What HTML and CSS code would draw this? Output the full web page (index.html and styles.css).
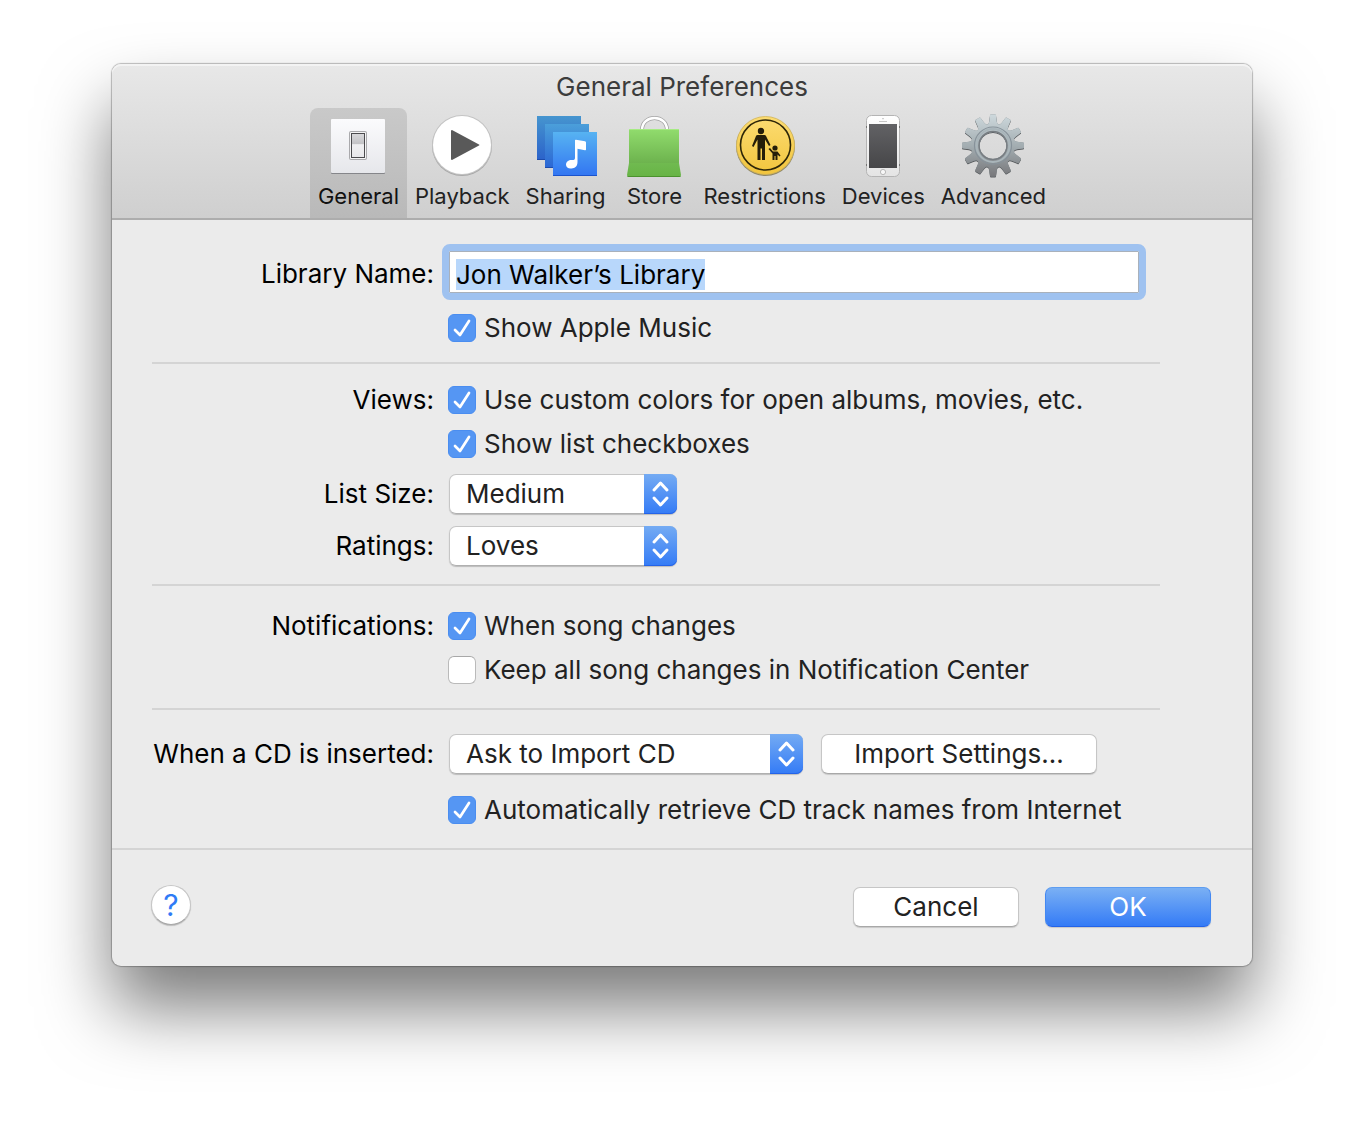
FILE: index.html
```html
<!DOCTYPE html>
<html lang="en">
<head>
  <meta charset="UTF-8">
  <meta name="viewport" content="width=device-width, initial-scale=1.0">
  <title>General Preferences</title>
  <link rel="stylesheet" href="styles.css">
</head>
<body>
  <form class="window" onsubmit="return false">
    <header class="titlebar">
      <h1 class="title">General Preferences</h1>
      <nav class="toolbar">
        <button type="button" class="tab active">
          <svg class="icon" viewBox="0 0 64 64">
            <defs>
              <linearGradient id="plate" x1="0" y1="0" x2="0" y2="1"><stop offset="0" stop-color="#fbfbfd"/><stop offset="1" stop-color="#e6e7eb"/></linearGradient>
              <linearGradient id="toggle" x1="0" y1="0" x2="0" y2="1"><stop offset="0" stop-color="#d9d9dc"/><stop offset=".45" stop-color="#c2c2c5"/><stop offset=".46" stop-color="#f0f0f2"/><stop offset="1" stop-color="#e8e8eb"/></linearGradient>
            </defs>
            <rect x="5" y="6" width="54" height="54" rx="1" fill="#85868a"/>
            <rect x="5" y="5" width="54" height="54" rx="1" fill="url(#plate)"/>
            <rect x="23" y="17" width="18" height="29" rx="2" fill="#a9a9ac"/>
            <rect x="24" y="18" width="16" height="27" rx="1" fill="#f4f4f5"/>
            <rect x="25.500" y="19.500" width="13" height="24" fill="url(#toggle)" stroke="#4b4b4e"/>
          </svg>
          <span>General</span>
        </button>
        <button type="button" class="tab">
          <svg class="icon" viewBox="0 0 64 64">
            <circle cx="32" cy="32" r="30" fill="#a8a8a8"/>
            <circle cx="32" cy="31" r="30" fill="#c4c4c4"/>
            <circle cx="32" cy="31" r="29" fill="#fff"/>
            <path d="M21 17q0-1 1-1L49 30.500q1 .5 0 1L22 46q-1 0-1-1z" fill="#595959"/>
          </svg>
          <span>Playback</span>
        </button>
        <button type="button" class="tab">
          <svg class="icon" viewBox="0 0 64 64">
            <defs>
              <linearGradient id="back" x1="0" y1="0" x2="0" y2="1"><stop offset="0" stop-color="#4695cf"/><stop offset="1" stop-color="#2b62ca"/></linearGradient>
              <linearGradient id="middle" x1="0" y1="0" x2="0" y2="1"><stop offset="0" stop-color="#4b9fda"/><stop offset="1" stop-color="#2b66d4"/></linearGradient>
              <linearGradient id="front" x1="0" y1="0" x2="0" y2="1"><stop offset="0" stop-color="#57b3f2"/><stop offset="1" stop-color="#3275f2"/></linearGradient>
            </defs>
            <path d="M3 2h44v44H3z" fill="url(#back)"/><path d="M3 45h44v1H3z" fill="#1d4cab"/>
            <path d="M11 10h44v44H11z" fill="url(#middle)"/><path d="M11 53h44v1H11z" fill="#1d4cab"/>
            <path d="M19 18h44v44H19z" fill="url(#front)"/><path d="M19 61h44v1H19z" fill="#1a53cc"/>
            <path d="M41 26.500q0-1 1-.7l9 1.400q1 .2 1 1.200v7q0 1-1 .8l-7.500-1.400V48c0 4.500-2.500 6-6 6.500-3 .4-5.500-1-5.500-3.700 0-3 2.500-4.800 5.500-4.800 1.500 0 3.500.3 3.500-2z" fill="#fff"/>
          </svg>
          <span>Sharing</span>
        </button>
        <button type="button" class="tab">
          <svg class="icon" viewBox="0 0 64 64">
            <defs>
              <linearGradient id="bag" x1="0" y1="0" x2="0" y2="1"><stop offset="0" stop-color="#91dc6d"/><stop offset="1" stop-color="#6db34e"/></linearGradient>
              <linearGradient id="fold" x1="0" y1="0" x2="0" y2="1"><stop offset="0" stop-color="#70ba50"/><stop offset="1" stop-color="#67b345"/></linearGradient>
            </defs>
            <path d="M20 16c0-16 25-16 25 0" fill="none" stroke="#a2a2a2" stroke-width="4"/>
            <path d="M20 16c0-16 25-16 25 0" fill="none" stroke="#fff" stroke-width="2.500"/>
            <path d="M7 15h50v34H7z" fill="url(#bag)"/>
            <path d="M7 15h50v1H7z" fill="#a6eb83"/>
            <path d="M7 49h50l2 12q0 2-2 2H7q-2 0-2-2z" fill="url(#fold)"/>
            <path d="M5 62h54q-.5 1-2 1H7q-1.500 0-2-1z" fill="#4b922e"/>
          </svg>
          <span>Store</span>
        </button>
        <button type="button" class="tab">
          <svg class="icon" viewBox="0 0 64 64">
            <defs>
              <linearGradient id="sign" x1="0" y1="0" x2="0" y2="1"><stop offset="0" stop-color="#fcdc72"/><stop offset="1" stop-color="#f2c53d"/></linearGradient>
            </defs>
            <circle cx="32.500" cy="32.500" r="29.500" fill="#8f8768"/>
            <circle cx="32.500" cy="31.500" r="29" fill="url(#sign)" stroke="#d2b558" stroke-width=".8"/>
            <circle cx="32.500" cy="31" r="25" fill="none" stroke="#2d2608" stroke-width="1.600"/>
            <g fill="#241d09">
              <circle cx="28" cy="17" r="3.200"/>
              <path d="M24.500 21h7q1 0 1.500 1l4.500 9-1.500 1-4-6.500V46h-3V34.500h-1.500V46h-3V25.500L20.500 33l-1.500-1 4-10q.5-1 1.500-1z"/>
              <circle cx="42" cy="34" r="2.600"/>
              <path d="M37 34l3 3.500h4.500l3 4-1 1-2-2V46h-2v-4h-1v4h-2v-6.500l-4-4.500z"/>
            </g>
          </svg>
          <span>Restrictions</span>
        </button>
        <button type="button" class="tab">
          <svg class="icon" viewBox="0 0 64 64">
            <defs>
              <linearGradient id="phone" x1="0" y1="0" x2="0" y2="1"><stop offset="0" stop-color="#fff"/><stop offset="1" stop-color="#e4e4e4"/></linearGradient>
              <linearGradient id="screen" x1="0" y1="0" x2="0" y2="1"><stop offset="0" stop-color="#626265"/><stop offset="1" stop-color="#464648"/></linearGradient>
            </defs>
            <rect x="15.500" y="1.500" width="33" height="61" rx="5" fill="url(#phone)" stroke="#b4b4b4"/>
            <path d="M15.500 12v2M48.500 12v2M15.500 50v2M48.500 50v2" stroke="#777"/>
            <path d="M18 10h28v44H18z" fill="url(#screen)"/>
            <path d="M28 7.500h8M31 4.700h2" stroke="#c6c6c6"/>
            <circle cx="32" cy="58" r="2.600" fill="#f8f8f8" stroke="#aaa" stroke-width=".8"/>
          </svg>
          <span>Devices</span>
        </button>
        <button type="button" class="tab">
          <svg class="icon" viewBox="0 0 64 64">
            <defs>
              <linearGradient id="steel" gradientUnits="userSpaceOnUse" x1="0" y1="1" x2="0" y2="63"><stop offset="0" stop-color="#cdd8dc"/><stop offset=".5" stop-color="#a3adb1"/><stop offset="1" stop-color="#77777a"/></linearGradient>
              <path id="tooth" d="M26 11q2-1 2.300-3.500L29 1.500q0-1 1-1h4q1 0 1 1l.7 6q.3 2.500 2.300 3.500l-2 4h-8z"/>
              <g id="gear">
                <path fill-rule="evenodd" d="M32 10a21.500 21.500 0 1 0 .1 0zM32 18a13.500 13.500 0 1 1-.1 0z"/>
                <use href="#tooth"/>
                <use href="#tooth" transform="rotate(30 32 31.500)"/>
                <use href="#tooth" transform="rotate(60 32 31.500)"/>
                <use href="#tooth" transform="rotate(90 32 31.500)"/>
                <use href="#tooth" transform="rotate(120 32 31.500)"/>
                <use href="#tooth" transform="rotate(150 32 31.500)"/>
                <use href="#tooth" transform="rotate(180 32 31.500)"/>
                <use href="#tooth" transform="rotate(210 32 31.500)"/>
                <use href="#tooth" transform="rotate(240 32 31.500)"/>
                <use href="#tooth" transform="rotate(270 32 31.500)"/>
                <use href="#tooth" transform="rotate(300 32 31.500)"/>
                <use href="#tooth" transform="rotate(330 32 31.500)"/>
              </g>
              <mask id="gear-mask"><use href="#gear" fill="#fff"/></mask>
            </defs>
            <use href="#gear" y="1" fill="#56595c"/>
            <use href="#gear" fill="#7c8589"/>
            <path d="M0 0h64v64H0z" fill="url(#steel)" mask="url(#gear-mask)"/>
            <circle cx="32" cy="31.500" r="18.500" fill="none" stroke="#87929a" stroke-width="1.200"/>
            <circle cx="32" cy="31.500" r="16.500" fill="none" stroke="#a9b5ba" stroke-width="2"/>
            <circle cx="32" cy="31.500" r="14" fill="none" stroke="#777d82" stroke-width="1.500"/>
          </svg>
          <span>Advanced</span>
        </button>
      </nav>
    </header>

    <main class="panel">
      <section class="section">
        <div class="row row-field">
          <label class="caption" for="library-name">Library Name:</label>
          <input type="text" class="field" id="library-name" value="Jon Walker’s Library" spellcheck="false" autocomplete="off">
        </div>
        <div class="row row-after-field">
          <label class="check"><input type="checkbox" checked>Show Apple Music</label>
        </div>
      </section>

      <section class="section section-views">
        <div class="row">
          <span class="caption">Views:</span>
          <label class="check"><input type="checkbox" checked>Use custom colors for open albums, movies, etc.</label>
        </div>
        <div class="row">
          <label class="check"><input type="checkbox" checked>Show list checkboxes</label>
        </div>
        <div class="row row-popup">
          <label class="caption" for="list-size">List Size:</label>
          <span class="popup">
            <select id="list-size">
              <option>Small</option>
              <option selected>Medium</option>
              <option>Large</option>
            </select>
            <svg class="arrows" viewBox="0 0 33 40"><path d="M10 16l6.500-7 6.500 7M10 24l6.500 7 6.500-7"/></svg>
          </span>
        </div>
        <div class="row row-popup">
          <label class="caption" for="ratings">Ratings:</label>
          <span class="popup">
            <select id="ratings">
              <option>Stars</option>
              <option selected>Loves</option>
            </select>
            <svg class="arrows" viewBox="0 0 33 40"><path d="M10 16l6.500-7 6.500 7M10 24l6.500 7 6.500-7"/></svg>
          </span>
        </div>
      </section>

      <section class="section section-notifications">
        <div class="row">
          <span class="caption">Notifications:</span>
          <label class="check"><input type="checkbox" checked>When song changes</label>
        </div>
        <div class="row">
          <label class="check"><input type="checkbox">Keep all song changes in Notification Center</label>
        </div>
      </section>

      <section class="section section-cd">
        <div class="row row-popup">
          <label class="caption" for="cd-action">When a CD is inserted:</label>
          <div class="controls">
            <span class="popup popup-wide">
              <select id="cd-action">
                <option>Show CD</option>
                <option selected>Ask to Import CD</option>
                <option>Import CD</option>
              </select>
              <svg class="arrows" viewBox="0 0 33 40"><path d="M10 16l6.500-7 6.500 7M10 24l6.500 7 6.500-7"/></svg>
            </span>
            <button type="button" class="button button-import">Import Settings...</button>
          </div>
        </div>
        <div class="row">
          <label class="check"><input type="checkbox" checked>Automatically retrieve CD track names from Internet</label>
        </div>
      </section>
    </main>

    <footer class="footer">
      <button type="button" class="help" aria-label="Help">?</button>
      <div class="actions">
        <button type="button" class="button">Cancel</button>
        <button type="submit" class="button primary">OK</button>
      </div>
    </footer>
  </form>

  <script>
    const libraryName = document.getElementById('library-name');
    libraryName.focus();
    libraryName.select();
  </script>
</body>
</html>
```
FILE: styles.css
```css
* {
  box-sizing: border-box;
}

body {
  margin: 0;
  min-height: 100vh;
  padding: 64px 112px;
  background: #fff;
  font-family: Inter, "Liberation Sans", sans-serif;
  font-size: 26px;
  line-height: 28px;
  color: #222;
}

button, input, select {
  margin: 0;
  font: inherit;
  color: inherit;
}

.window {
  min-width: 1060px;
  border-radius: 9px;
  background: #ebebeb;
  box-shadow: 0 0 1px 1px rgba(0, 0, 0, 0.25), 0 42px 70px rgba(0, 0, 0, 0.52);
}

/* Title and toolbar */
.titlebar {
  border-bottom: 2px solid #adadad;
  border-radius: 9px 9px 0 0;
  background: linear-gradient(#e8e8e8, #cfcfcf);
  box-shadow: inset 0 2px 0 #f3f3f3;
}

.title {
  margin: 0;
  padding: 9px 0 7px;
  font-size: 26px;
  font-weight: 400;
  text-align: center;
  color: #3c3c3c;
}

.toolbar {
  display: flex;
  justify-content: center;
}

.tab {
  display: flex;
  flex-direction: column;
  align-items: center;
  min-width: 82px;
  height: 110px;
  padding: 6px 8px 0;
  border: 0;
  border-radius: 8px 8px 0 0;
  background: none;
  font-size: 22px;
  line-height: 36px;
}

.tab.active {
  background: linear-gradient(#c9c9c9, #b9b9b9);
  color: #111;
}

.icon {
  width: 64px;
  height: 64px;
}

/* Settings */
.panel {
  margin: 0 92px 0 40px;
}

.section {
  padding: 24px 0 20px;
  border-bottom: 2px solid #d4d4d4;
}

.section-views {
  padding: 22px 0 18px;
}

.section-notifications {
  padding: 26px 0 24px;
}

.section-cd {
  padding: 24px 0;
  border-bottom: 0;
}

.row {
  display: grid;
  grid-template-columns: 282px 1fr;
  column-gap: 14px;
  align-items: center;
}

.row + .row {
  margin-top: 16px;
}

.row-popup + .row-popup {
  margin-top: 12px;
}

.section-cd .row + .row {
  margin-top: 22px;
}

.row-field {
  height: 56px;
}

.row-field .caption {
  padding-top: 4px;
}

.row-field + .row-after-field {
  margin-top: 14px;
}

.caption {
  text-align: right;
  color: #000;
}

.field {
  height: 42px;
  margin: 0 21px 0 1px;
  padding: 4px 6px 0;
  border: 1px solid #a9b1bb;
  background: #fff;
  color: #000;
  line-height: 34px;
}

.field:focus {
  border-radius: 1px;
  outline: 7px solid #9fc2f0;
  outline-offset: 0;
}

.field::selection {
  background: #b8d7fb;
  color: #000;
}

.check {
  grid-column: 2;
  display: flex;
  align-items: center;
  gap: 8px;
}

.check input {
  appearance: none;
  width: 28px;
  height: 28px;
  border: 1px solid #bababa;
  border-top-color: #a8a8a8;
  border-radius: 6px;
  background: #fff;
}

.check input:checked {
  border-color: #4a8df0;
  background: #5596f3 url("data:image/svg+xml,%3Csvg xmlns='http://www.w3.org/2000/svg' viewBox='0 0 26 26'%3E%3Cpath d='M6 15l5 5L20 6' fill='none' stroke='%23fff' stroke-width='2.700' stroke-linecap='round' stroke-linejoin='round'/%3E%3C/svg%3E");
}

.controls {
  display: flex;
  align-items: center;
  gap: 18px;
}

.popup {
  position: relative;
  display: block;
  width: 228px;
  height: 40px;
  margin-left: 1px;
  border-radius: 7px;
  box-shadow: 0 1px 1px rgba(0, 0, 0, 0.2);
}

.popup-wide {
  width: 354px;
}

.popup select {
  appearance: none;
  width: 100%;
  height: 40px;
  padding: 0 40px 0 16px;
  border: 1px solid #c6c6c6;
  border-bottom-color: #b0b0b0;
  border-radius: 7px;
  background: #fff;
}

/* Blue end of the pop-up, clicks go through to the select */
.arrows {
  position: absolute;
  top: 0;
  right: 0;
  width: 33px;
  height: 40px;
  border-radius: 0 7px 7px 0;
  background: linear-gradient(#74abf3, #347bf6);
  box-shadow: inset 0 -1px 0 #2463e8;
  fill: none;
  stroke: #fff;
  stroke-width: 3;
  stroke-linecap: round;
  stroke-linejoin: round;
  pointer-events: none;
}

.button {
  width: 166px;
  height: 40px;
  padding: 0;
  border: 1px solid #c6c6c6;
  border-bottom-color: #a8a8a8;
  border-radius: 7px;
  background: #fff;
  box-shadow: 0 1px 1px rgba(0, 0, 0, 0.15);
}

.button-import {
  width: 276px;
}

.button.primary {
  border-color: #5e9df0 #4388f2 #2463e8;
  background: linear-gradient(#7ab0f4, #347bf6);
  color: #fff;
}

/* Bottom bar */
.footer {
  display: flex;
  align-items: flex-start;
  justify-content: space-between;
  padding: 35px 41px 39px 39px;
  border-top: 2px solid #d4d4d4;
}

.help {
  width: 40px;
  height: 40px;
  padding: 0;
  border: 1px solid #c6c6c6;
  border-bottom-color: #a8a8a8;
  border-radius: 50%;
  background: #fff;
  box-shadow: 0 1px 1px rgba(0, 0, 0, 0.2);
  font-size: 30px;
  color: #2f7bf6;
}

.actions {
  display: flex;
  gap: 26px;
  padding-top: 2px;
}
```
